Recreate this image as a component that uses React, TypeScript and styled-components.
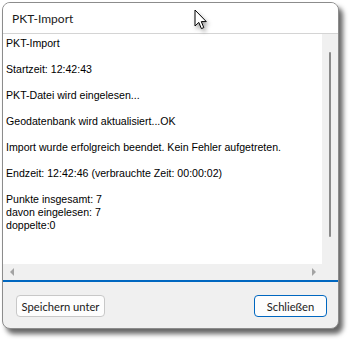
import React from 'react';
import styled, { createGlobalStyle } from 'styled-components';

const Global = createGlobalStyle`
  html, body { margin: 0; padding: 0; background: #ffffff; }
  body { width: 354px; height: 344px; overflow: hidden; }
`;

const Page = styled.div`
  position: relative;
  width: 354px;
  height: 344px;
  padding: 2px 0 0 2px;
  box-sizing: border-box;
`;

const Window = styled.div`
  width: 337px;
  height: 327px;
  box-sizing: border-box;
  border: 1px solid #8c8c8c;
  border-radius: 8px;
  background: #f0f0f0;
  box-shadow: 4px 5px 5px rgba(0, 0, 0, 0.6);
  display: flex;
  flex-direction: column;
  overflow: hidden;
`;

const TitleBar = styled.div`
  height: 30px;
  flex: none;
  background: #ffffff;
  border-bottom: 1px solid #d4d4d4;
  display: flex;
  align-items: center;
  padding-left: 9px;
  font-family: Lato, sans-serif;
  font-size: 12px;
  color: #1a1a1a;
`;

const TextBox = styled.div`
  flex: none;
  height: 248px;
  box-sizing: border-box;
  border-bottom: 2px solid #0067c0;
  display: grid;
  grid-template-columns: 1fr 16px;
  grid-template-rows: 1fr 16px;
`;

const Content = styled.div`
  background: #ffffff;
  padding: 3px 0 0 3px;
  font-family: "Liberation Sans", Arial, sans-serif;
  font-size: 10.6px;
  line-height: 13px;
  color: #000;
  white-space: pre;
  overflow: hidden;
`;

const VScroll = styled.div`
  background: #f0f0f0;
  display: flex;
  flex-direction: column;
  align-items: center;
  padding-top: 18px;
  padding-bottom: 27px;
`;

const Thumb = styled.div`
  flex: 1;
  width: 2px;
  background: #8a8a8a;
  border-radius: 1px;
`;

const HScroll = styled.div`
  background: #f0f0f0;
  display: flex;
  align-items: center;
  justify-content: space-between;
  padding: 0 6px 0 7px;
`;

const Corner = styled.div`
  background: #f0f0f0;
`;

const Arrow = styled.div<{ $dir: 'left' | 'right' }>`
  width: 0;
  height: 0;
  border-top: 4px solid transparent;
  border-bottom: 4px solid transparent;
  ${(p) =>
    p.$dir === 'left'
      ? 'border-right: 4px solid #a3a3a3;'
      : 'border-left: 4px solid #a3a3a3;'}
`;

const ButtonBar = styled.div`
  flex: 1;
  display: flex;
  justify-content: space-between;
  align-items: flex-start;
  padding: 13px 11px 0 13px;
`;

const Button = styled.button<{ $primary?: boolean; $w: number }>`
  width: ${(p) => p.$w}px;
  height: 22px;
  box-sizing: border-box;
  padding: 0;
  background: #fdfdfd;
  border: 1px solid ${(p) => (p.$primary ? '#0067c0' : '#c8c8c8')};
  border-radius: 4px;
  font-family: Lato, sans-serif;
  font-size: 11.2px;
  color: #1a1a1a;
  display: flex;
  align-items: center;
  justify-content: center;
  cursor: default;
`;

const Cursor = styled.svg`
  position: absolute;
  left: 194px;
  top: 9px;
  filter: drop-shadow(2px 3px 2px rgba(0, 0, 0, 0.35));
`;

const lines = [
  'PKT-Import',
  '',
  'Startzeit: 12:42:43',
  '',
  'PKT-Datei wird eingelesen...',
  '',
  'Geodatenbank wird aktualisiert...OK',
  '',
  'Import wurde erfolgreich beendet. Kein Fehler aufgetreten.',
  '',
  'Endzeit: 12:42:46 (verbrauchte Zeit: 00:00:02)',
  '',
  'Punkte insgesamt: 7',
  'davon eingelesen: 7',
  'doppelte:0',
];

export default function App() {
  return (
    <>
      <Global />
      <Page>
        <Window>
          <TitleBar>PKT-Import</TitleBar>
          <TextBox>
            <Content>{lines.join('\n')}</Content>
            <VScroll>
              <Thumb />
            </VScroll>
            <HScroll>
              <Arrow $dir="left" />
              <Arrow $dir="right" />
            </HScroll>
            <Corner />
          </TextBox>
          <ButtonBar>
            <Button $w={89}>Speichern unter</Button>
            <Button $primary $w={73}>Schließen</Button>
          </ButtonBar>
        </Window>
        <Cursor width="14" height="22" viewBox="0 0 14 22">
          <path
            d="M1 1 L1 17 L4.8 13.4 L7.4 19.6 L9.8 18.6 L7.3 12.6 L12.3 12.6 Z"
            fill="#ffffff"
            stroke="#000000"
            strokeWidth="1"
            strokeLinejoin="miter"
          />
        </Cursor>
      </Page>
    </>
  );
}
